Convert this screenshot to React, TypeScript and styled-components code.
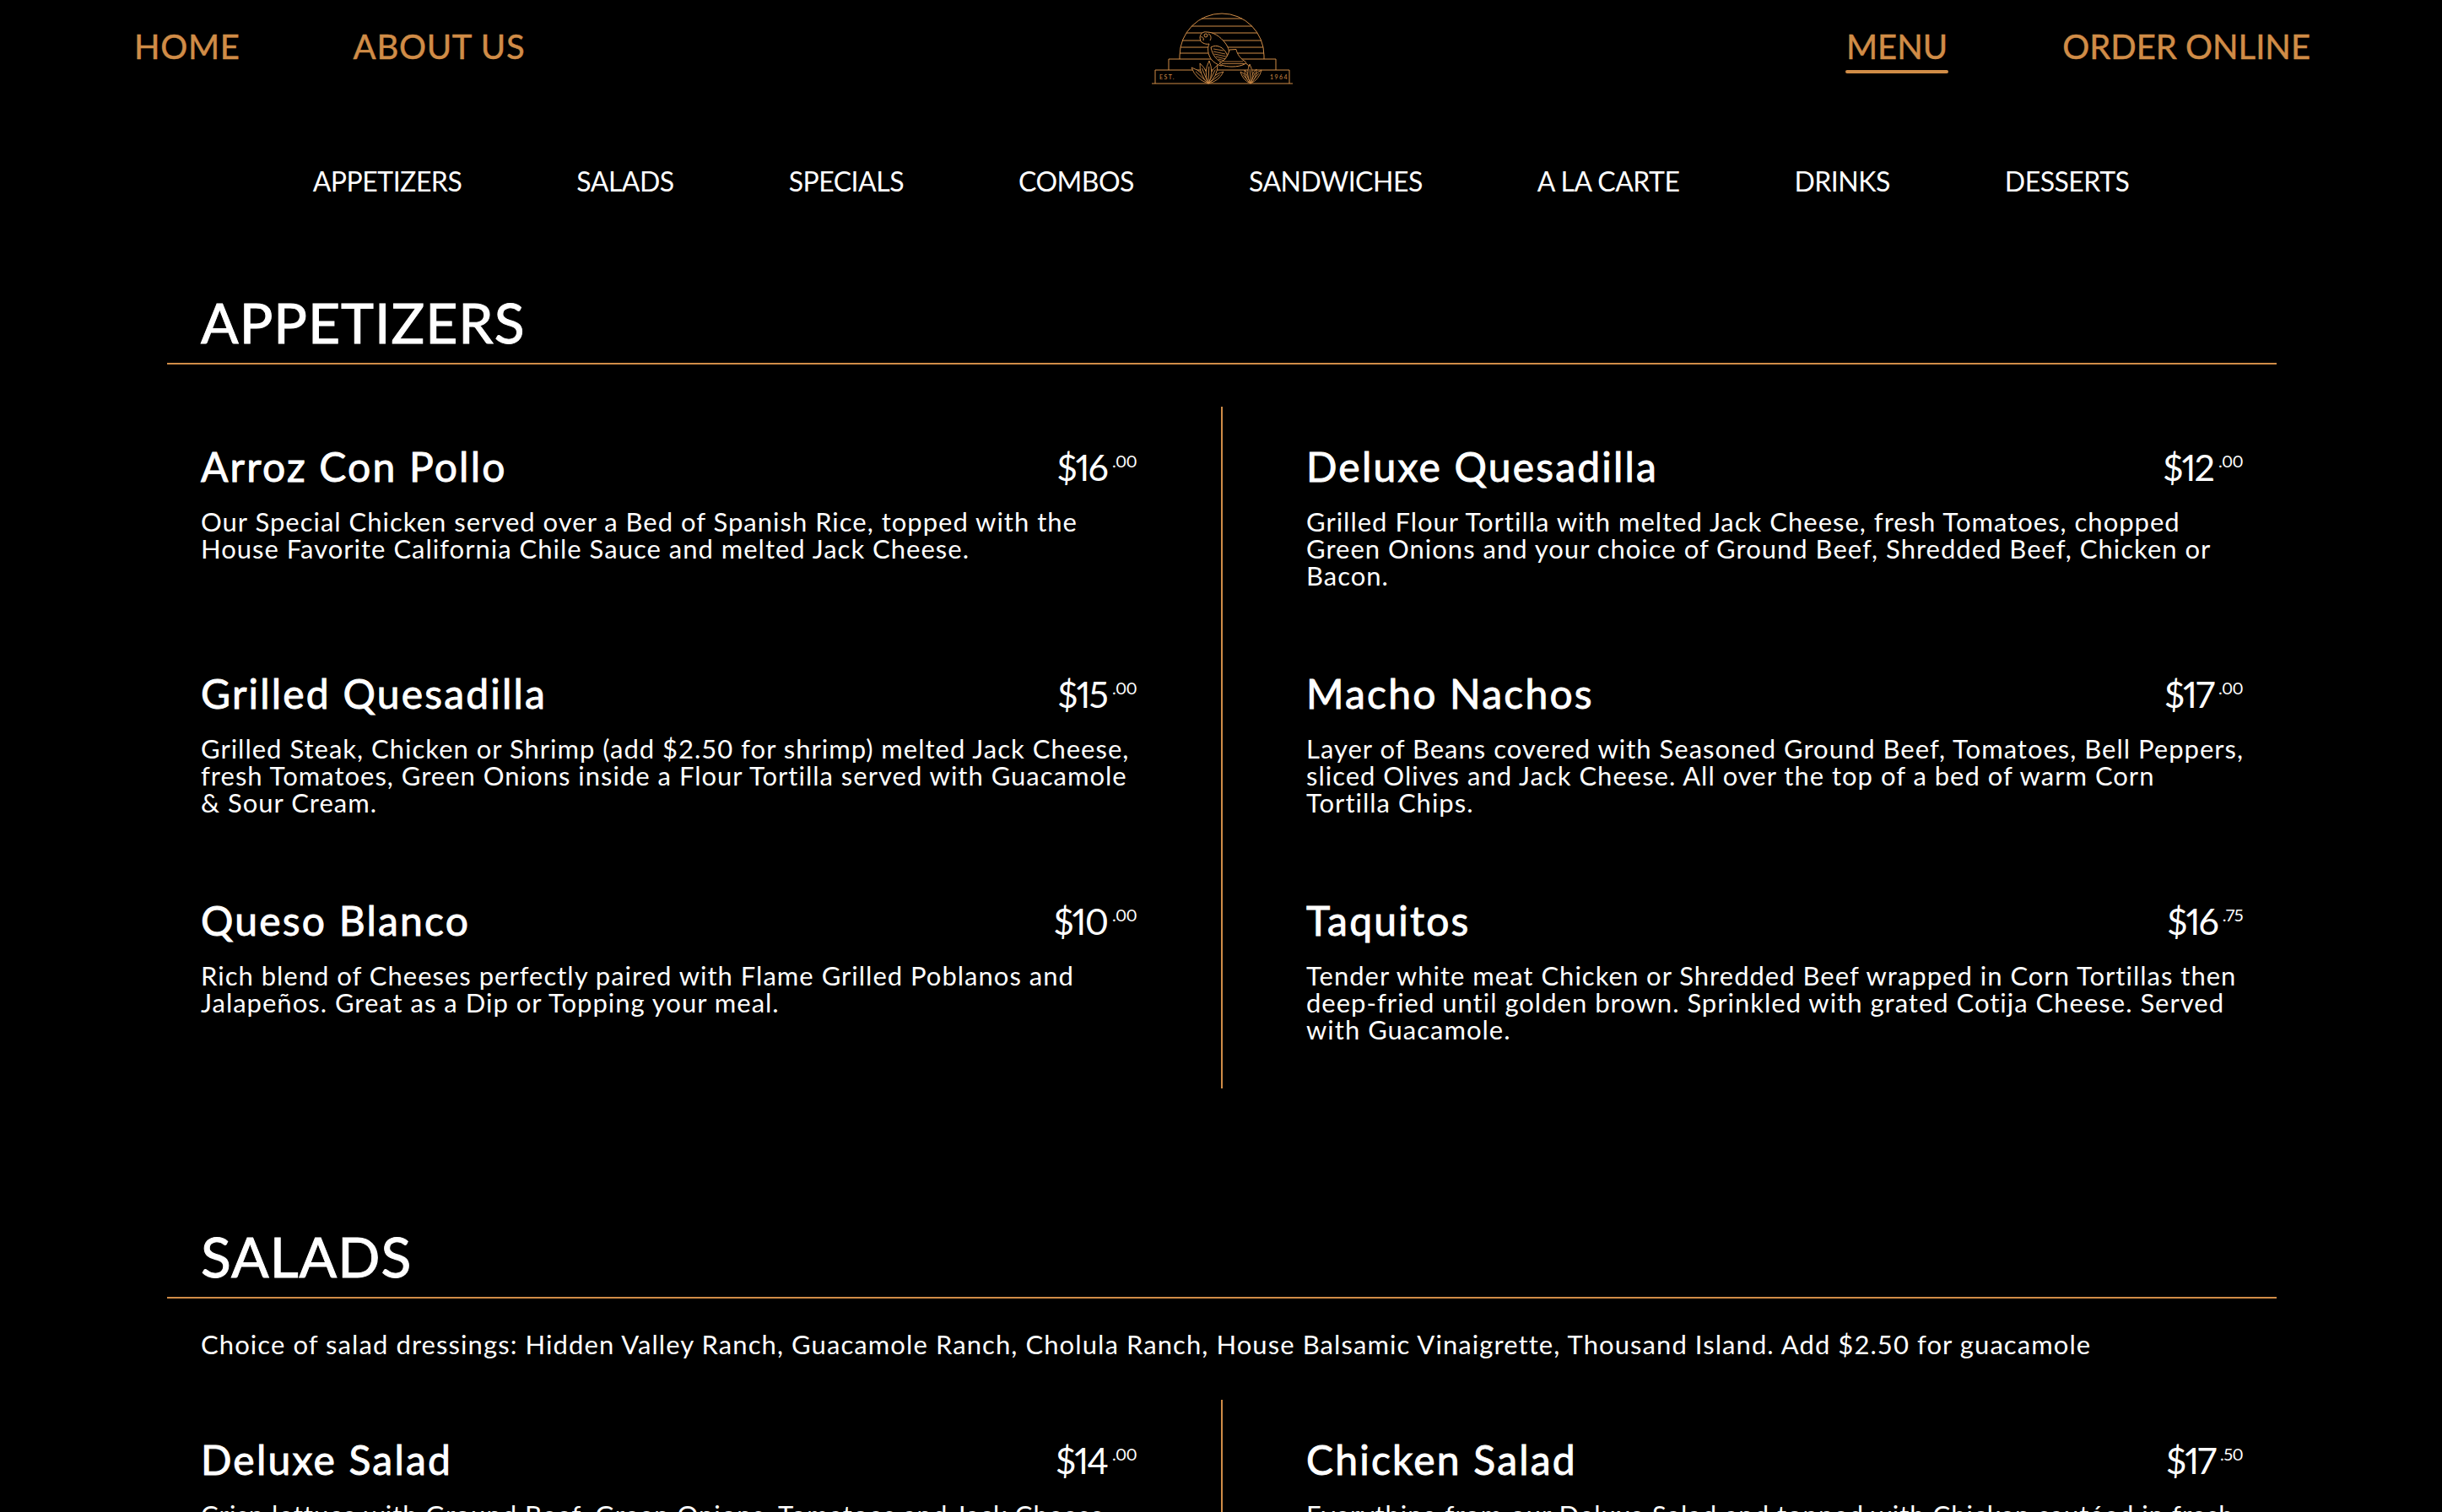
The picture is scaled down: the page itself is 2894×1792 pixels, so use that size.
import React from 'react';
import styled, { createGlobalStyle } from 'styled-components';

const GOLD = '#d08c47';

const GlobalStyle = createGlobalStyle`
  html, body {
    margin: 0;
    background: #000;
  }
  body {
    font-family: Lato, "Open Sans", sans-serif;
    color: #fff;
  }
`;

interface Item {
  name: string;
  price: string;
  cents: string;
  lines: string[];
}

const APPETIZERS_LEFT: Item[] = [
  {
    name: 'Arroz Con Pollo',
    price: '$16',
    cents: '.00',
    lines: [
      'Our Special Chicken served over a Bed of Spanish Rice, topped with the',
      'House Favorite California Chile Sauce and melted Jack Cheese.',
    ],
  },
  {
    name: 'Grilled Quesadilla',
    price: '$15',
    cents: '.00',
    lines: [
      'Grilled Steak, Chicken or Shrimp (add $2.50 for shrimp) melted Jack Cheese,',
      'fresh Tomatoes, Green Onions inside a Flour Tortilla served with Guacamole',
      '& Sour Cream.',
    ],
  },
  {
    name: 'Queso Blanco',
    price: '$10',
    cents: '.00',
    lines: [
      'Rich blend of Cheeses perfectly paired with Flame Grilled Poblanos and',
      'Jalapeños. Great as a Dip or Topping your meal.',
    ],
  },
];

const APPETIZERS_RIGHT: Item[] = [
  {
    name: 'Deluxe Quesadilla',
    price: '$12',
    cents: '.00',
    lines: [
      'Grilled Flour Tortilla with melted Jack Cheese, fresh Tomatoes, chopped',
      'Green Onions and your choice of Ground Beef, Shredded Beef, Chicken or',
      'Bacon.',
    ],
  },
  {
    name: 'Macho Nachos',
    price: '$17',
    cents: '.00',
    lines: [
      'Layer of Beans covered with Seasoned Ground Beef, Tomatoes, Bell Peppers,',
      'sliced Olives and Jack Cheese. All over the top of a bed of warm Corn',
      'Tortilla Chips.',
    ],
  },
  {
    name: 'Taquitos',
    price: '$16',
    cents: '.75',
    lines: [
      'Tender white meat Chicken or Shredded Beef wrapped in Corn Tortillas then',
      'deep-fried until golden brown. Sprinkled with grated Cotija Cheese. Served',
      'with Guacamole.',
    ],
  },
];

const SALADS_LEFT: Item[] = [
  {
    name: 'Deluxe Salad',
    price: '$14',
    cents: '.00',
    lines: ['Crisp lettuce with Ground Beef, Green Onions, Tomatoes and Jack Cheese'],
  },
];

const SALADS_RIGHT: Item[] = [
  {
    name: 'Chicken Salad',
    price: '$17',
    cents: '.50',
    lines: ['Everything from our Deluxe Salad and topped with Chicken sautéed in fresh'],
  },
];

const CATEGORIES = [
  'APPETIZERS',
  'SALADS',
  'SPECIALS',
  'COMBOS',
  'SANDWICHES',
  'A LA CARTE',
  'DRINKS',
  'DESSERTS',
];

// pointed leaf from the base of a plant out to its tip, with the middle vein
function leafPath(bx: number, by: number, tx: number, ty: number) {
  const mx = (bx + tx) / 2;
  const my = (by + ty) / 2;
  const nx = (ty - by) * 0.24;
  const ny = (bx - tx) * 0.24;
  return `M${bx} ${by}Q${mx + nx} ${my + ny} ${tx} ${ty}Q${mx - nx} ${my - ny} ${bx} ${by}ZM${bx} ${by}L${mx + (tx - mx) * 0.5} ${my + (ty - my) * 0.5}`;
}

function Plant({ base, tips }: { base: [number, number]; tips: [number, number][] }) {
  return (
    <g fill="#000" strokeWidth=".9">
      {tips.map(([x, y]) => (
        <path key={`${x}-${y}`} d={leafPath(base[0], base[1], x, y)} />
      ))}
    </g>
  );
}

function Logo() {
  return (
    <LogoSvg viewBox="-1 0 220 110" fill="none" stroke={GOLD} strokeWidth="1">
      {/* sun */}
      <path d="M58 70V66a50 50 0 0 1 100 0V70" />
      <path d="M84 22H132M72 31H144M66 39H150M61 48H155M59 56H157M58 63H158" />
      {/* steps */}
      <path d="M45 83V70H172V83" />
      <path d="M29 99V83H188V99" />
      <path d="M25 99H192" />
      <EstText x="34" y="94">EST.</EstText>
      <EstText x="165" y="94">1964</EstText>
      {/* parrot */}
      <path
        fill="#000"
        d="M82 45C82 40 86 37 90 38C98 38 106 43 112 51C116 56 118 63 116 70C114 74 111 77 107 78C101 76 96 72 94 68C91 62 91 56 93 52C89 53 85 51 83 49Z"
      />
      <circle cx="89" cy="42" r="2" />
      <path d="M83 44C85 43 87 45 86 48M92 40C95 41 96 45 94 48" />
      <path d="M95 56C102 52 110 56 114 64C115 69 113 73 110 74C103 73 97 66 95 56Z" />
      <path d="M98 58L110 60M98 61L112 64M99 64L113 67M101 67L113 70M104 70L111 72" strokeWidth=".8" />
      {/* jar */}
      <path
        fill="#000"
        d="M117 59L125 58.5C126 64 130 69 134 72C137 73 137 75 135 76C131 78 126 79 120 79C114 79 108 78 105 75C110 73 115 68 117 59Z"
      />
      <path d="M110 73H133M108 75.5H135" strokeWidth=".8" />
      <path d="M136 75C139 76 141 79 141 83" />
      {/* agaves */}
      <Plant
        base={[92, 99]}
        tips={[
          [72, 80],
          [110, 85],
          [82, 75],
          [103, 77],
          [93, 72],
        ]}
      />
      <Plant
        base={[142, 99]}
        tips={[
          [130, 85],
          [155, 83],
          [135, 83],
          [149, 82],
          [141, 76],
        ]}
      />
    </LogoSvg>
  );
}

function MenuItem({ item }: { item: Item }) {
  return (
    <ItemBlock>
      <ItemHead>
        <ItemName>{item.name}</ItemName>
        <Price>
          {item.price}
          <Cents>{item.cents}</Cents>
        </Price>
      </ItemHead>
      <Description>
        {item.lines.map((line) => (
          <DescriptionLine key={line}>{line}</DescriptionLine>
        ))}
      </Description>
    </ItemBlock>
  );
}

export default function App() {
  return (
    <Page>
      <GlobalStyle />
      <TopNav>
        <NavGroup>
          <NavLink>HOME</NavLink>
          <NavLink>ABOUT US</NavLink>
        </NavGroup>
        <Logo />
        <NavGroup $end>
          <NavLink $active>MENU</NavLink>
          <NavLink>ORDER ONLINE</NavLink>
        </NavGroup>
      </TopNav>
      <CategoryNav>
        {CATEGORIES.map((category) => (
          <CategoryLink key={category}>{category}</CategoryLink>
        ))}
      </CategoryNav>
      <Section>
        <SectionTitle>APPETIZERS</SectionTitle>
        <Columns>
          <LeftColumn>
            {APPETIZERS_LEFT.map((item) => (
              <MenuItem key={item.name} item={item} />
            ))}
          </LeftColumn>
          <RightColumn>
            {APPETIZERS_RIGHT.map((item) => (
              <MenuItem key={item.name} item={item} />
            ))}
          </RightColumn>
        </Columns>
      </Section>
      <Section>
        <SectionTitle>SALADS</SectionTitle>
        <SectionNote>
          Choice of salad dressings: Hidden Valley Ranch, Guacamole Ranch, Cholula Ranch, House
          Balsamic Vinaigrette, Thousand Island. Add $2.50 for guacamole
        </SectionNote>
        <Columns>
          <LeftColumn>
            {SALADS_LEFT.map((item) => (
              <MenuItem key={item.name} item={item} />
            ))}
          </LeftColumn>
          <RightColumn>
            {SALADS_RIGHT.map((item) => (
              <MenuItem key={item.name} item={item} />
            ))}
          </RightColumn>
        </Columns>
      </Section>
    </Page>
  );
}

const Page = styled.div`
  width: 2894px;
  height: 1792px;
  overflow: hidden;
  background: #000;
`;

const TopNav = styled.header`
  display: grid;
  grid-template-columns: 1fr 220px 1fr;
  align-items: center;
  height: 110px;
  padding: 0 156px 0 159px;
`;

const NavGroup = styled.nav<{ $end?: boolean }>`
  display: flex;
  gap: ${(p) => (p.$end ? '136px' : '134px')};
  justify-content: ${(p) => (p.$end ? 'flex-end' : 'flex-start')};
  letter-spacing: ${(p) => (p.$end ? '0' : '0.7px')};
`;

const NavLink = styled.a<{ $active?: boolean }>`
  position: relative;
  font-size: 40px;
  line-height: 48px;
  color: ${GOLD};
  -webkit-text-stroke: 0.5px ${GOLD};
  white-space: nowrap;

  ${(p) =>
    p.$active &&
    `
    &::after {
      content: '';
      position: absolute;
      left: -1px;
      right: -1px;
      bottom: -8px;
      height: 4px;
      border-radius: 2px;
      background: ${GOLD};
    }
  `}
`;

const LogoSvg = styled.svg`
  display: block;
  width: 220px;
  height: 110px;
`;

const EstText = styled.text`
  font-family: Lato, sans-serif;
  font-size: 7px;
  letter-spacing: 1.4px;
  fill: ${GOLD};
  stroke: none;
`;

const CategoryNav = styled.nav`
  display: flex;
  justify-content: center;
  gap: 136px;
  margin-top: 85px;
`;

const CategoryLink = styled.a`
  font-size: 32px;
  line-height: 40px;
  letter-spacing: -0.5px;
  color: #fff;
  white-space: nowrap;
`;

const Section = styled.section`
  width: 2500px;
  margin: 107px 0 0 198px;

  & + & {
    margin-top: 159px;
  }
`;

const SectionTitle = styled.h2`
  margin: 0;
  padding: 0 0 8px 40px;
  border-bottom: 2px solid ${GOLD};
  font-size: 66px;
  line-height: 80px;
  font-weight: 400;
  letter-spacing: 1px;
  -webkit-text-stroke: 1px #fff;
  color: #fff;
`;

const SectionNote = styled.p`
  margin: 38px 0 0;
  padding-left: 40px;
  font-size: 31px;
  line-height: 32px;
  letter-spacing: 1.08px;
  white-space: nowrap;
`;

const Columns = styled.div`
  display: grid;
  grid-template-columns: 1251px 1249px;
  margin-top: 50px;
`;

const LeftColumn = styled.div`
  display: grid;
  grid-auto-rows: 229px;
  row-gap: 40px;
  padding: 41px 100px 0 40px;
  border-right: 2px solid ${GOLD};
`;

const RightColumn = styled.div`
  display: grid;
  grid-auto-rows: 229px;
  row-gap: 40px;
  padding: 41px 40px 0 99px;
`;

const ItemBlock = styled.article`
  min-width: 0;
`;

const ItemHead = styled.div`
  display: flex;
  justify-content: space-between;
  align-items: center;
  height: 60px;
`;

const ItemName = styled.h3`
  margin: 0;
  font-size: 48px;
  line-height: 60px;
  font-weight: 400;
  letter-spacing: 2.2px;
  -webkit-text-stroke: 0.9px #fff;
  color: #fff;
`;

const Price = styled.span`
  display: flex;
  align-items: flex-start;
  padding-top: 1px;
  font-size: 43px;
  line-height: 60px;
  font-weight: 400;
  letter-spacing: -2px;
  font-feature-settings: 'pnum';
`;

const Cents = styled.span`
  margin: 12px 0 0 6px;
  font-size: 20px;
  line-height: 20px;
  letter-spacing: -0.6px;
`;

const Description = styled.div`
  margin-top: 19px;
`;

const DescriptionLine = styled.div`
  font-size: 31px;
  line-height: 32px;
  letter-spacing: 1px;
  white-space: nowrap;
`;
